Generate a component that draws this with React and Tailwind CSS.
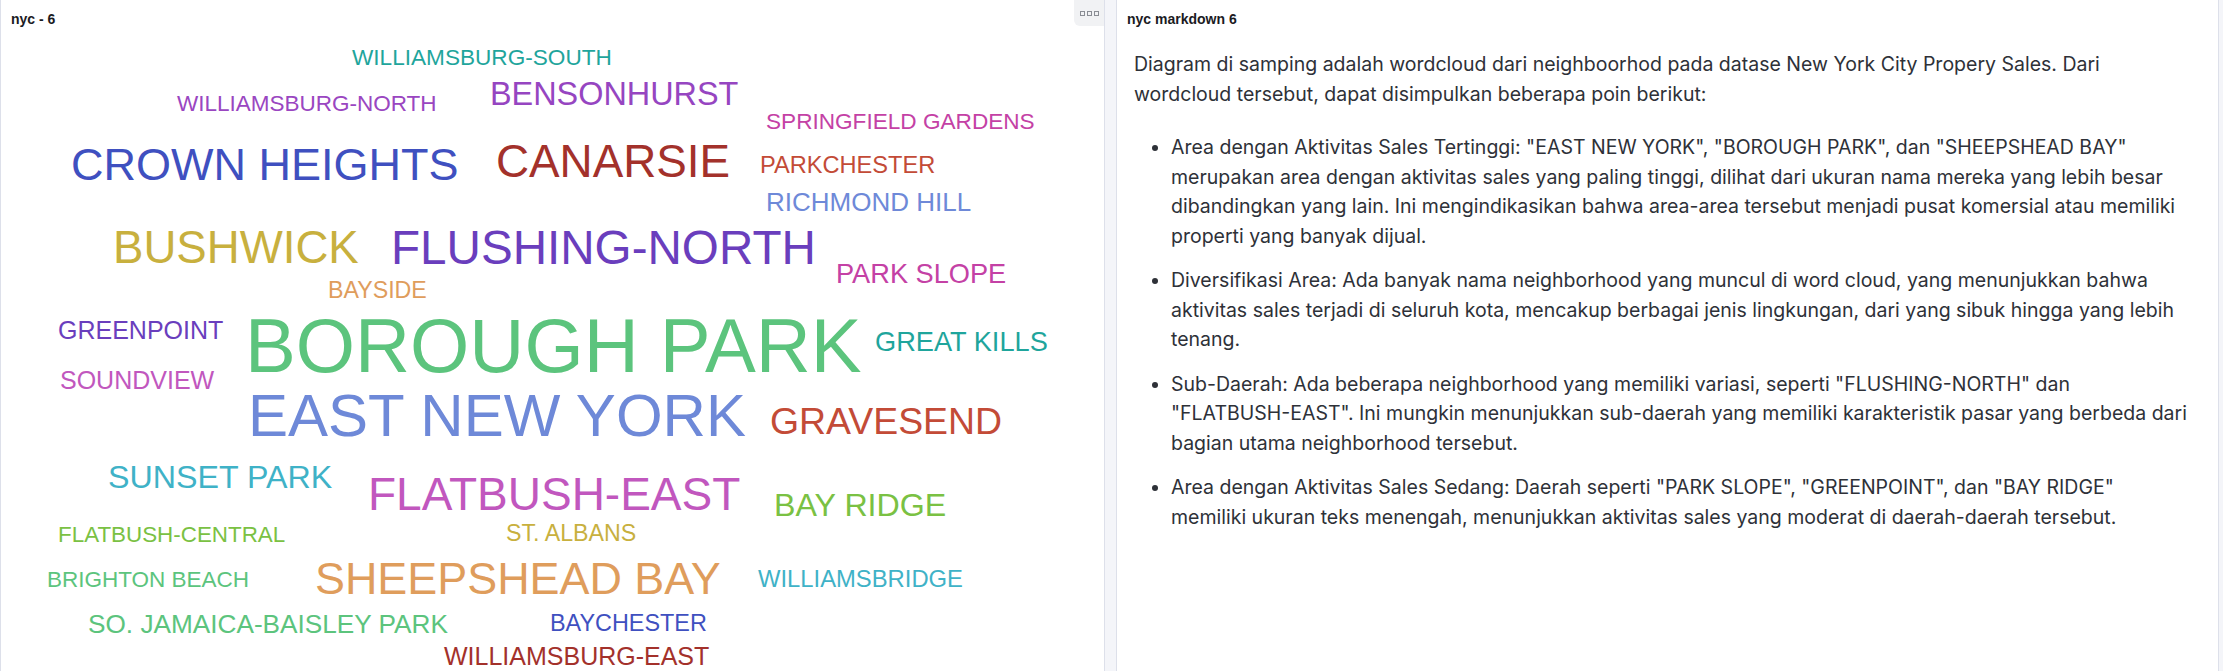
import React from 'react';

const words = [
  { text: 'WILLIAMSBURG-SOUTH', cls: 'left-[351px] top-[47px] text-[22.6px] text-[#1fa59c]' },
  { text: 'WILLIAMSBURG-NORTH', cls: 'left-[176px] top-[93px] text-[22.5px] text-[#9a46c1]' },
  { text: 'BENSONHURST', cls: 'left-[489px] top-[78px] text-[32.4px] text-[#9645c1]' },
  { text: 'SPRINGFIELD GARDENS', cls: 'left-[765px] top-[111px] text-[22.6px] text-[#c441a5]' },
  { text: 'CROWN HEIGHTS', cls: 'left-[70px] top-[142px] text-[45px] text-[#3f50c0]' },
  { text: 'CANARSIE', cls: 'left-[495px] top-[139px] text-[45.8px] text-[#a3312b]' },
  { text: 'PARKCHESTER', cls: 'left-[759px] top-[154px] text-[23.6px] text-[#c34b37]' },
  { text: 'RICHMOND HILL', cls: 'left-[765px] top-[189px] text-[26px] text-[#6e89d8]' },
  { text: 'BUSHWICK', cls: 'left-[112px] top-[225px] text-[45.6px] text-[#c8b03e]' },
  { text: 'FLUSHING-NORTH', cls: 'left-[390px] top-[224px] text-[47.6px] text-[#6a3ebd]' },
  { text: 'PARK SLOPE', cls: 'left-[835px] top-[260px] text-[27.2px] text-[#c441a5]' },
  { text: 'BAYSIDE', cls: 'left-[327px] top-[279px] text-[23.2px] text-[#df9d5c]' },
  { text: 'GREENPOINT', cls: 'left-[57px] top-[318px] text-[25px] text-[#6a3ebd]' },
  { text: 'BOROUGH PARK', cls: 'left-[244px] top-[308px] text-[76.2px] text-[#5cc47d]' },
  { text: 'GREAT KILLS', cls: 'left-[874px] top-[328px] text-[27.2px] text-[#1fa59c]' },
  { text: 'SOUNDVIEW', cls: 'left-[59px] top-[368px] text-[25px] text-[#c157be]' },
  { text: 'EAST NEW YORK', cls: 'left-[247px] top-[386px] text-[60px] text-[#6e89d8]' },
  { text: 'GRAVESEND', cls: 'left-[769px] top-[403px] text-[37.4px] text-[#c34b37]' },
  { text: 'SUNSET PARK', cls: 'left-[107px] top-[461px] text-[32.2px] text-[#3fb2c7]' },
  { text: 'FLATBUSH-EAST', cls: 'left-[367px] top-[471px] text-[46px] text-[#c157be]' },
  { text: 'BAY RIDGE', cls: 'left-[773px] top-[489px] text-[32.2px] text-[#7ac143]' },
  { text: 'FLATBUSH-CENTRAL', cls: 'left-[57px] top-[524px] text-[22.4px] text-[#7ac143]' },
  { text: 'ST. ALBANS', cls: 'left-[505px] top-[522px] text-[23.2px] text-[#c8b03e]' },
  { text: 'BRIGHTON BEACH', cls: 'left-[46px] top-[569px] text-[22.5px] text-[#5cc47d]' },
  { text: 'SHEEPSHEAD BAY', cls: 'left-[314px] top-[557px] text-[44.9px] text-[#df9d5c]' },
  { text: 'WILLIAMSBRIDGE', cls: 'left-[757px] top-[567px] text-[23.8px] text-[#3fb2c7]' },
  { text: 'SO. JAMAICA-BAISLEY PARK', cls: 'left-[87px] top-[611px] text-[26.2px] text-[#5cc47d]' },
  { text: 'BAYCHESTER', cls: 'left-[549px] top-[612px] text-[23.4px] text-[#3f50c0]' },
  { text: 'WILLIAMSBURG-EAST', cls: 'left-[443px] top-[644px] text-[25px] text-[#a3312b]' },
];

const points = [
  'Area dengan Aktivitas Sales Tertinggi: "EAST NEW YORK", "BOROUGH PARK", dan "SHEEPSHEAD BAY" merupakan area dengan aktivitas sales yang paling tinggi, dilihat dari ukuran nama mereka yang lebih besar dibandingkan yang lain. Ini mengindikasikan bahwa area-area tersebut menjadi pusat komersial atau memiliki properti yang banyak dijual.',
  'Diversifikasi Area: Ada banyak nama neighborhood yang muncul di word cloud, yang menunjukkan bahwa aktivitas sales terjadi di seluruh kota, mencakup berbagai jenis lingkungan, dari yang sibuk hingga yang lebih tenang.',
  'Sub-Daerah: Ada beberapa neighborhood yang memiliki variasi, seperti "FLUSHING-NORTH" dan "FLATBUSH-EAST". Ini mungkin menunjukkan sub-daerah yang memiliki karakteristik pasar yang berbeda dari bagian utama neighborhood tersebut.',
  'Area dengan Aktivitas Sales Sedang: Daerah seperti "PARK SLOPE", "GREENPOINT", dan "BAY RIDGE" memiliki ukuran teks menengah, menunjukkan aktivitas sales yang moderat di daerah-daerah tersebut.',
];

function WordCloudBlock() {
  return (
    <div className="relative h-full w-[1105px] shrink-0 overflow-hidden border-x border-[#dde0ea] bg-white font-['Liberation_Sans',Arial,sans-serif]">
      <div className="pl-[10px] pt-[9px] text-[14px] font-bold leading-[20px] text-[#1b1b1f]">nyc - 6</div>

      {/* block menu */}
      <button className="absolute right-0 top-0 flex h-[26px] w-[30px] items-center justify-center rounded-bl-[6px] bg-[#f1f2f4]">
        <svg width="19" height="5" viewBox="0 0 19 5" fill="none">
          <rect x="0.5" y="0.5" width="4" height="4" stroke="#8a8d94" />
          <rect x="7.5" y="0.5" width="4" height="4" stroke="#8a8d94" />
          <rect x="14.5" y="0.5" width="4" height="4" stroke="#8a8d94" />
        </svg>
      </button>

      {words.map((w) => (
        <span key={w.text} className={`absolute whitespace-nowrap leading-none ${w.cls}`}>
          {w.text}
        </span>
      ))}
    </div>
  );
}

function MarkdownBlock() {
  return (
    <div className="ml-[11px] h-full w-[1103px] shrink-0 border-x border-[#dde0ea] bg-white">
      <div className="pl-[10px] pt-[9px] font-['Liberation_Sans',Arial,sans-serif] text-[14px] font-bold leading-[20px] text-[#1b1b1f]">
        nyc markdown 6
      </div>
      <div className="mt-[21px] pl-[17px] pr-[28px] font-['Inter',sans-serif] text-[19.5px] leading-[29.5px] text-[#2e3138]">
        <p className="mb-[24px]">
          Diagram di samping adalah wordcloud dari neighboorhod pada datase New York City Propery Sales. Dari wordcloud tersebut, dapat disimpulkan beberapa poin berikut:
        </p>
        <ul className="list-disc pl-[37px]">
          {points.map((p, i) => (
            <li key={i} className="mb-[15px]">{p}</li>
          ))}
        </ul>
      </div>
    </div>
  );
}

export default function App() {
  return (
    <div className="flex h-[671px] w-[2223px] overflow-hidden bg-[#f4f5f9]">
      <WordCloudBlock />
      <MarkdownBlock />
    </div>
  );
}
